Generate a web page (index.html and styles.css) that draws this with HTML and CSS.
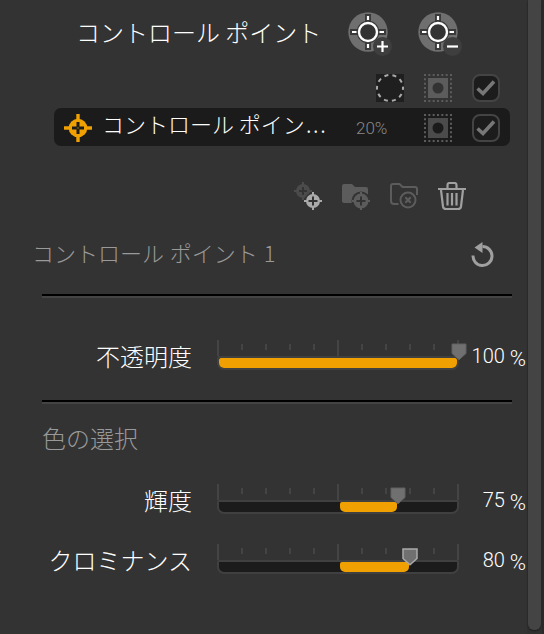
FILE: index.html
```html
<!DOCTYPE html>
<html lang="ja">

<head>
    <meta charset="UTF-8">
    <meta name="viewport" content="width=device-width, initial-scale=1.0">
    <title>コントロール ポイント</title>
    <link rel="stylesheet" href="styles.css">
</head>

<body>
    <!-- shared icons -->
    <svg class="defs" width="0" height="0">
        <symbol id="target" viewBox="0 0 48 48">
            <circle cx="20" cy="20" r="19.7" fill="#6f6f6f" />
            <path d="M20 2v8M20 30v8M2 20h8M30 20h8" stroke="#3a3a3a" stroke-width="6" />
            <circle cx="20" cy="20" r="11.3" fill="#3a3a3a" />
            <circle cx="20" cy="20" r="9" fill="#333" stroke="#fff" stroke-width="2.4" />
            <path d="M20 4v4M20 32v4M4 20h4.500M31.500 20h4.500" stroke="#fff" stroke-width="2.200" />
            <circle cx="34.500" cy="34.500" r="9.500" fill="#3e3e3e" />
        </symbol>
        <symbol id="mask" viewBox="0 0 28 28">
            <path d="M0 1h28M0 27h28M1 0v28M27 0v28" stroke="#5c5c5c" stroke-width="2" stroke-dasharray="2 2.333" />
            <path d="M4 4h20v20H4zM14 8.500a5.500 5.500 0 1 0 0 11a5.500 5.500 0 1 0 0-11z" fill="currentColor" fill-rule="evenodd" />
        </symbol>
        <symbol id="check" viewBox="0 0 28 28">
            <rect x="1" y="1" width="26" height="26" rx="7" fill="#1c1c1c" stroke="#444" stroke-width="2" />
            <path d="M5.500 14.500l5.500 5L22 7.500" fill="none" stroke="#777" stroke-width="3.600" />
        </symbol>
        <symbol id="point" viewBox="0 0 28 28">
            <path d="M14 0v28M0 14h28" stroke="currentColor" stroke-width="3.400" />
            <circle cx="14" cy="14" r="9.300" fill="currentColor" />
        </symbol>
        <symbol id="thumb" viewBox="0 0 16 18">
            <path d="M1 1h14v9.500L8 16.800L1 10.500z" />
        </symbol>
    </svg>

    <main class="panel">
        <header class="title">
            <h1>コントロール ポイント</h1>
            <svg class="target" viewBox="0 0 48 48">
                <use href="#target" />
                <path d="M34.500 29v11M29 34.500h11" stroke="#fff" stroke-width="2.200" />
            </svg>
            <svg class="target" viewBox="0 0 48 48">
                <use href="#target" />
                <path d="M29 34.500h11" stroke="#fff" stroke-width="2.200" />
            </svg>
        </header>

        <div class="tools">
            <svg class="icon" viewBox="0 0 28 28">
                <path d="M0 0h28v28H0z" fill="#1f1f1f" />
                <circle cx="14" cy="14" r="13" fill="none" stroke="#aaa" stroke-width="2" stroke-dasharray="4 4.168" stroke-dashoffset="2" />
            </svg>
            <svg class="icon"><use href="#mask" /></svg>
            <svg class="icon"><use href="#check" /></svg>
        </div>

        <div class="item">
            <svg class="icon point" viewBox="0 0 28 28">
                <use href="#point" />
                <path d="M14 8v4.500M14 15.500V20M8 14h4.500M15.500 14H20M14 12v4M12 14h4" stroke="#1b1b1b" stroke-width="3" />
                <path d="M14 12.800v2.400" stroke="#5a4210" stroke-width="2.400" />
            </svg>
            <span class="name">コントロール ポイン<span class="dots">...</span></span>
            <span class="size">20%</span>
            <svg class="icon mask"><use href="#mask" /></svg>
            <svg class="icon"><use href="#check" /></svg>
        </div>

        <div class="actions">
            <svg viewBox="0 0 28 30">
                <g fill="#4b4b4b" stroke="#4b4b4b" stroke-width="2">
                    <circle cx="9" cy="9" r="6" />
                    <path d="M9 0v18M0 9h18" />
                </g>
                <path d="M9 5v8M5 9h8" stroke="#333" stroke-width="2" />
                <circle cx="19" cy="19" r="8.500" fill="#333" />
                <g fill="#aaa" stroke="#aaa" stroke-width="2">
                    <circle cx="19" cy="19" r="6" />
                    <path d="M19 10v18M10 19h18" />
                </g>
                <path d="M19 14.500v9M14.500 19h9" stroke="#333" stroke-width="2" />
            </svg>
            <svg viewBox="0 0 28 30">
                <path d="M2 2h8l3 3h11q2 0 2 2v14H2q-2 0-2-2V4q0-2 2-2z" fill="#5c5c5c" />
                <circle cx="19" cy="19" r="9.500" fill="#333" />
                <g fill="#5c5c5c" stroke="#5c5c5c" stroke-width="2">
                    <circle cx="19" cy="19" r="6.500" />
                    <path d="M19 10v18M10 19h18" />
                </g>
                <path d="M19 14.500v9M14.500 19h9" stroke="#333" stroke-width="2" />
            </svg>
            <svg viewBox="0 0 28 30" fill="none" stroke="#5c5c5c" stroke-width="2">
                <path d="M8.500 22H4q-3 0-3-3V4q0-2 2-2h6.500l3 3H25q2 0 2 2v6" />
                <circle cx="18" cy="18" r="7.500" />
                <path d="M15.300 15.300l5.400 5.400M20.700 15.300l-5.400 5.400" stroke-width="2.300" />
            </svg>
            <svg viewBox="0 0 28 30" fill="none" stroke="#a0a0a0" stroke-width="2.200">
                <path d="M9.500 6V3q0-2 2-2h5q2 0 2 2v3M0 7h28" />
                <path d="M3 8l2 16.500q.4 2.500 3 2.500h12q2.600 0 3-2.500L25 8" />
                <path d="M9.500 11v12.500M14 11v12.500M18.500 11v12.500" />
            </svg>
        </div>

        <div class="section-head">
            <h2>コントロール ポイント 1</h2>
            <svg class="reset" viewBox="0 0 24 26">
                <path d="M2 13.500a9.500 9.500 0 1 0 9.500-9" fill="none" stroke="#a0a0a0" stroke-width="3" />
                <path d="M3.500 5.500L11.500 0v11z" fill="#a0a0a0" />
            </svg>
        </div>

        <hr>

        <div class="row opacity">
            <label>不透明度</label>
            <div class="slider">
                <div class="ticks"><i></i><i></i><i></i><i></i><i></i><i></i><i></i><i></i><i></i><i></i><i></i></div>
                <div class="track"><div class="fill" style="left: 0%; width: 100%"></div></div>
                <svg class="thumb" style="left: 100%"><use href="#thumb" /></svg>
            </div>
            <span class="value">100 <small>%</small></span>
        </div>

        <hr>

        <h3>色の選択</h3>

        <div class="row">
            <label>輝度</label>
            <div class="slider">
                <div class="ticks"><i></i><i></i><i></i><i></i><i></i><i></i><i></i><i></i><i></i><i></i><i></i></div>
                <div class="track"><div class="fill" style="left: 50.800%; width: 24%"></div></div>
                <svg class="thumb" style="left: 74.600%"><use href="#thumb" /></svg>
            </div>
            <span class="value">75 <small>%</small></span>
        </div>

        <div class="row">
            <label>クロミナンス</label>
            <div class="slider">
                <div class="ticks"><i></i><i></i><i></i><i></i><i></i><i></i><i></i><i></i><i></i><i></i><i></i></div>
                <div class="track"><div class="fill" style="left: 50.800%; width: 29%"></div></div>
                <svg class="thumb active" style="left: 79.700%"><use href="#thumb" /></svg>
            </div>
            <span class="value">80 <small>%</small></span>
        </div>
    </main>

    <aside class="scroll">
        <div class="bar"></div>
    </aside>
</body>

</html>
```
FILE: styles.css
```css
* {
    box-sizing: border-box;
    padding: 0;
    margin: 0;
}

body {
    display: flex;
    height: 634px;
    overflow: hidden;
    background-color: #333;
    color: #fff;
    font-family: "Noto Sans CJK JP", sans-serif;
    font-weight: 300;
}

svg {
    display: block;
    flex: none;
}

.defs {
    position: absolute;
}

h1, h2, h3 {
    font-weight: 300;
    white-space: nowrap;
}

.panel {
    width: 527px;
    flex: none;
}

.title {
    display: flex;
    height: 64px;
    padding: 12px 0 0 76px;
}

.title h1 {
    width: 272px;
    font-size: 24px;
    line-height: 40px;
}

.target {
    width: 48px;
    height: 48px;
    margin-right: 22px;
}

.icon {
    width: 28px;
    height: 28px;
    color: #5c5c5c;
}

.tools {
    display: flex;
    justify-content: flex-end;
    gap: 20px;
    height: 44px;
    padding: 10px 27px 0 0;
}

.item {
    display: flex;
    align-items: center;
    width: 456px;
    height: 38px;
    margin-left: 54px;
    padding: 2px 10px 0;
    border-radius: 7px;
    background-color: #1b1b1b;
}

.item .point {
    color: #f0a000;
}

.item .name {
    width: 254px;
    padding: 0 0 9px 10px;
    font-size: 22px;
    line-height: 29px;
    white-space: nowrap;
}

.item .dots {
    margin-left: 1px;
    letter-spacing: 1.7px;
}

.item .size {
    width: 78px;
    padding-left: 10px;
    color: #888;
    font-family: Roboto, sans-serif;
    font-size: 17px;
}

.item .mask {
    margin-right: 20px;
    color: #4b4b4b;
}

.actions {
    display: flex;
    gap: 20px;
    height: 84px;
    padding: 36px 0 0 294px;
}

.actions svg {
    width: 28px;
    height: 30px;
}

.section-head {
    display: flex;
    justify-content: space-between;
    height: 64px;
    padding: 6px 32px 0 32px;
}

.section-head h2 {
    color: #999;
    font-size: 22px;
    line-height: 32px;
    word-spacing: 1px;
}

.reset {
    width: 24px;
    height: 26px;
    margin-top: 6px;
}

hr {
    width: 470px;
    height: 4px;
    margin-left: 42px;
    border: 0;
    border-top: 2px solid #000;
    background-color: #444;
}

.row {
    display: flex;
    height: 60px;
}

.opacity {
    height: 102px;
    padding-top: 42px;
}

.row label {
    width: 217px;
    padding-right: 25px;
    font-size: 24px;
    line-height: 32px;
    text-align: right;
    white-space: nowrap;
}

.slider {
    position: relative;
    width: 242px;
    height: 32px;
}

.ticks {
    display: flex;
    justify-content: space-between;
    height: 16px;
}

.ticks i {
    width: 2px;
    height: 6px;
    margin-top: 4px;
    background-color: #444;
}

.ticks i:nth-child(5n+1) {
    height: 16px;
    margin-top: 0;
}

.track {
    position: relative;
    height: 14px;
    border: 2px solid #404040;
    border-radius: 2px 2px 7px 7px;
    background-color: #1b1b1b;
}

.fill {
    position: absolute;
    top: 0;
    height: 10px;
    border-radius: 2px 2px 5px 5px;
    background-color: #f0a000;
}

.thumb {
    position: absolute;
    top: 3px;
    width: 16px;
    height: 18px;
    margin-left: -8px;
    fill: #707070;
    stroke: #606060;
    stroke-width: 1px;
}

.thumb.active {
    top: 4px;
    stroke: #aaa;
    stroke-width: 1.5px;
}

.value {
    width: 67px;
    font-family: Roboto, sans-serif;
    font-size: 20px;
    line-height: 33px;
    text-align: right;
    white-space: nowrap;
}

.value small {
    position: relative;
    top: 3px;
    font-size: 22px;
    line-height: 20px;
}

h3 {
    height: 80px;
    padding: 16px 0 0 42px;
    color: #999;
    font-size: 24px;
    line-height: 36px;
}

.scroll {
    width: 17px;
    height: 634px;
    background-color: #303030;
    border-right: 2px solid #2a2a2a;
}

.bar {
    width: 13px;
    height: 630px;
    margin-left: 1px;
    border-radius: 0 0 6px 6px;
    background-color: #444;
    box-shadow: 0 1px 2px #1b1b1b;
}
```
